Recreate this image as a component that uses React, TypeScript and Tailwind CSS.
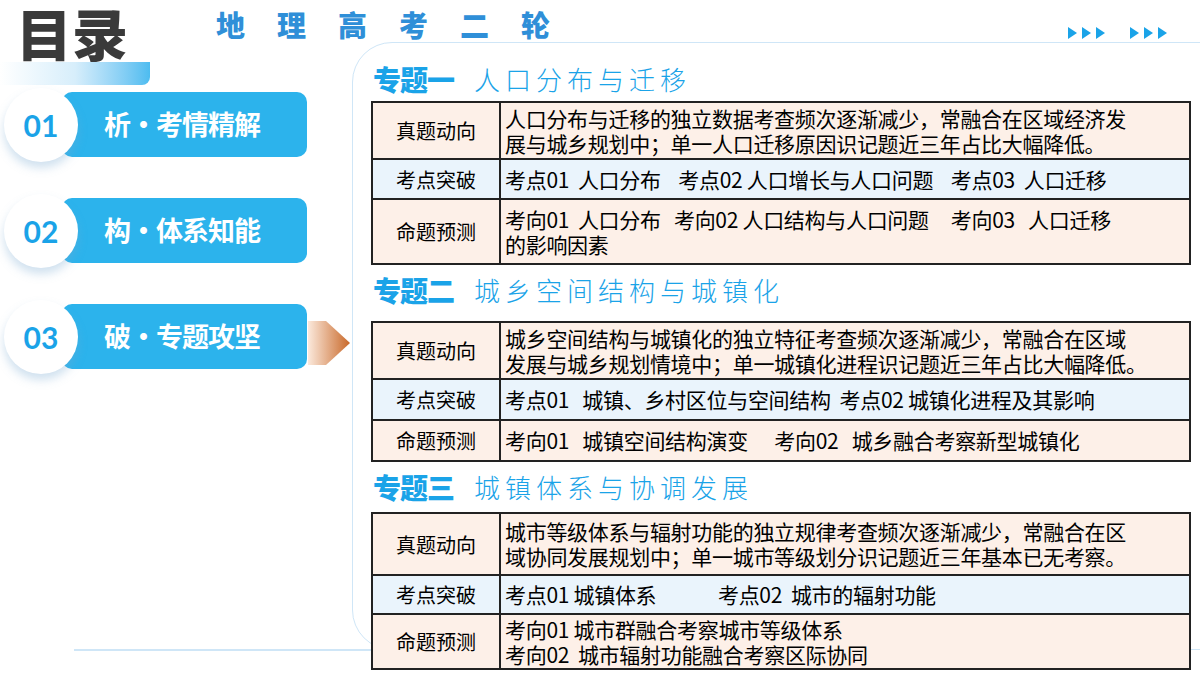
import React from "react";

const F = { fontFamily: '"Noto Sans CJK SC", "Noto Sans", sans-serif' };
const SERIF = { fontFamily: '"Noto Sans CJK SC", sans-serif', fontWeight: 300 as const };

type Row = { label: string; lines: string[]; h: number; bg: string };

function Table({ rows }: { rows: Row[] }) {
  return (
    <div className="border-2 border-[#222] w-[820px] text-[21px] leading-[25px] text-black">
      {rows.map((r, i) => (
        <div key={i} className={`flex ${r.bg} ${i > 0 ? "border-t-2 border-[#222]" : ""}`} style={{ height: r.h }}>
          <div className="w-[128px] shrink-0 flex items-center justify-center border-r-2 border-[#222] text-[20px]">{r.label}</div>
          <div className="flex-1 flex flex-col justify-center px-[4px] whitespace-pre tracking-[-0.3px]">
            {r.lines.map((l, j) => <div key={j}>{l}</div>)}
          </div>
        </div>
      ))}
    </div>
  );
}

function Heading({ a, b }: { a: string; b: string }) {
  return (
    <div className="flex items-center h-[38px] pl-[2px] leading-none">
      <span className="text-[28px] font-black text-[#1aa3e8] tracking-[-1px]">{a}</span>
      <span className="text-[26px] text-[#1aa3e8] ml-5 tracking-[5px]" style={SERIF}>{b}</span>
    </div>
  );
}

function Pill({ n, t }: { n: string; t: string }) {
  return (
    <div className="relative h-[65px] w-[310px]">
      <div className="absolute left-[62px] top-0 w-[245px] h-[65px] rounded-[10px] bg-[#2cb3ec] flex items-center pl-[42px] text-white text-[27px] font-bold tracking-[-1px]">{t}</div>
      <div className="absolute left-[4px] top-[-4px] w-[74px] h-[74px] rounded-full bg-white shadow-[0_6px_10px_rgba(120,170,210,0.35)] flex items-center justify-center text-[#1aa3e8] text-[30px] font-bold" style={{ fontFamily: "Lato, sans-serif" }}>{n}</div>
    </div>
  );
}

const Arrows = () => (
  <svg width="42" height="14" viewBox="0 0 42 14">
    {[0, 14, 28].map((x) => <polygon key={x} points={`${x},1 ${x + 9},7 ${x},13`} fill="#1aa3e8" />)}
  </svg>
);

export default function App() {
  const p = "bg-[#fdf0e8]";
  const b = "bg-[#eaf4fc]";
  return (
    <div className="relative w-[1200px] h-[675px] bg-white overflow-hidden" style={F}>
      <div className="absolute left-[16px] top-[4px] text-[56px] font-black text-[#3a3a3a] leading-none">目录</div>
      <div className="absolute left-[216px] top-[4px] text-[29px] font-black tracking-[32px] text-[#2f8fd8] leading-[40px]">地理高考二轮</div>
      <div className="absolute left-[1068px] top-[26px] flex gap-[20px]"><Arrows /><Arrows /></div>
      <div className="absolute left-0 top-[62px] w-[150px] h-[23px] rounded-br-[8px] bg-gradient-to-r from-white via-[#d7eefb] to-[#4cbcf0]" />
      <div className="absolute left-0 top-[92px] flex flex-col gap-[41px]">
        <Pill n="01" t="析•考情精解" />
        <Pill n="02" t="构•体系知能" />
        <Pill n="03" t="破•专题攻坚" />
      </div>
      <svg className="absolute left-[308px] top-[319px]" width="44" height="48" viewBox="0 0 44 48">
        <defs>
          <linearGradient id="g" x1="0" x2="1">
            <stop offset="0" stopColor="#fbe9dc" />
            <stop offset="1" stopColor="#c9692a" />
          </linearGradient>
        </defs>
        <polygon points="0,2 18,2 42,24 18,46 0,46" fill="url(#g)" />
      </svg>
      <div className="absolute left-[352px] top-[42px] w-[900px] h-[608px] rounded-l-[40px] border border-[#cfe6f7]" />
      <div className="absolute left-[74px] top-[649px] w-[300px] h-[2px] bg-[#cfe6f7]" />
      <div className="absolute left-[371px] top-[60px] flex flex-col">
        <Heading a="专题一" b="人口分布与迁移" />
        <div className="h-[3px]" />
        <Table rows={[
          { label: "真题动向", lines: ["人口分布与迁移的独立数据考查频次逐渐减少，常融合在区域经济发", "展与城乡规划中；单一人口迁移原因识记题近三年占比大幅降低。"], h: 55, bg: p },
          { label: "考点突破", lines: ["考点01  人口分布    考点02 人口增长与人口问题    考点03  人口迁移"], h: 40, bg: b },
          { label: "命题预测", lines: ["考向01  人口分布   考向02 人口结构与人口问题     考向03   人口迁移", "的影响因素"], h: 65, bg: p },
        ]} />
        <div className="h-[6px]" />
        <Heading a="专题二" b="城乡空间结构与城镇化" />
        <div className="h-[12px]" />
        <Table rows={[
          { label: "真题动向", lines: ["城乡空间结构与城镇化的独立特征考查频次逐渐减少，常融合在区域", "发展与城乡规划情境中；单一城镇化进程识记题近三年占比大幅降低。"], h: 55, bg: p },
          { label: "考点突破", lines: ["考点01   城镇、乡村区位与空间结构  考点02 城镇化进程及其影响"], h: 41, bg: b },
          { label: "命题预测", lines: ["考向01   城镇空间结构演变      考向02   城乡融合考察新型城镇化"], h: 41, bg: p },
        ]} />
        <div className="h-[6px]" />
        <Heading a="专题三" b="城镇体系与协调发展" />
        <div className="h-[6px]" />
        <Table rows={[
          { label: "真题动向", lines: ["城市等级体系与辐射功能的独立规律考查频次逐渐减少，常融合在区", "域协同发展规划中；单一城市等级划分识记题近三年基本已无考察。"], h: 60, bg: p },
          { label: "考点突破", lines: ["考点01 城镇体系              考点02  城市的辐射功能"], h: 39, bg: b },
          { label: "命题预测", lines: ["考向01 城市群融合考察城市等级体系", "考向02  城市辐射功能融合考察区际协同"], h: 55, bg: p },
        ]} />
      </div>
    </div>
  );
}
